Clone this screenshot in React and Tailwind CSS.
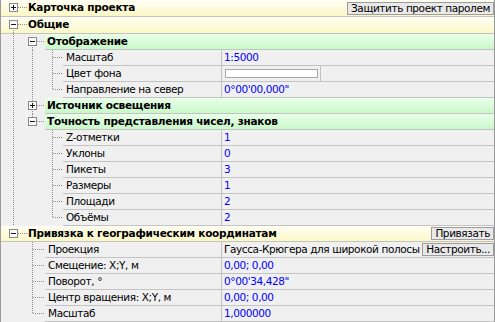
import React from "react";

const DOT = "#8f8f8f";

function V({ x, y1 = 0, y2 = 17 }) {
  return <line x1={x + 0.5} x2={x + 0.5} y1={y1} y2={y2} stroke={DOT} strokeDasharray="1 1" />;
}
function H({ x1, x2, y = 7 }) {
  return <line x1={x1} x2={x2} y1={y + 0.5} y2={y + 0.5} stroke={DOT} strokeDasharray="1 1" />;
}
function Box({ cx, cy = 7, plus }) {
  return (
    <g>
      <rect x={cx - 3.5} y={cy - 3.5} width="8" height="8" fill="#fbfbfb" stroke="#8a8a8a" />
      <line x1={cx - 2} x2={cx + 3} y1={cy + 0.5} y2={cy + 0.5} stroke="#1a1a1a" />
      {plus && <line x1={cx + 0.5} x2={cx + 0.5} y1={cy - 2} y2={cy + 3} stroke="#1a1a1a" />}
    </g>
  );
}

// x coords in the svg are relative to the inner left edge (page x - 1)
function Gutter({ w, h = 16, children }) {
  return (
    <svg width={w} height={h} className="shrink-0 block" shapeRendering="crispEdges">
      {children}
    </svg>
  );
}

function Btn({ children, className = "" }) {
  return (
    <div className={"h-[13px] flex items-center px-[3px] bg-[#e9e9e9] border border-[#9c9c9c] text-black font-normal tracking-[-0.4px] leading-none " + className}>
      {children}
    </div>
  );
}

function Cat({ label, plus, lines, btn, tall }) {
  const h = tall ? 17 : 16;
  const cy = tall ? 7 : 7;
  return (
    <div className={"flex bg-gradient-to-b from-[#fffff4] to-[#fbf7c6] border-b border-[#c3c3c3] " + (tall ? "h-[17px]" : "h-[16px]")}>
      <Gutter w={26} h={h}>
        {lines}
        <Box cx={12} cy={cy} plus={plus} />
        <H x1={17} x2={26} y={cy} />
      </Gutter>
      <div className="flex-1 flex items-center font-bold tracking-[-0.25px] text-black pl-[1px] whitespace-nowrap">{label}</div>
      {btn && <Btn className="self-center">{btn}</Btn>}
    </div>
  );
}

function Grp({ label, plus, up, down, tall }) {
  return (
    <div className={"flex " + (tall ? "h-[17px]" : "h-[16px]")}>
      <Gutter w={44} h={tall ? 17 : 16}>
        <V x={12} />
        {up && <V x={31} y1={0} y2={4} />}
        {down && <V x={31} y1={11} y2={17} />}
        <Box cx={31} plus={plus} />
        <H x1={36} x2={44} />
      </Gutter>
      <div className="flex-1 flex items-center pl-[2px] font-bold tracking-[-0.25px] text-black bg-gradient-to-b from-[#eaffea] to-[#c9f8c9] border-b border-[#c3c3c3] whitespace-nowrap">
        {label}
      </div>
    </div>
  );
}

function Value({ v }) {
  if (v.color)
    return (
      <div className="flex-1 flex items-stretch">
        <div className="w-[99px] flex items-center pl-[3px] border-r border-[#c3c3c3]">
          <div className="w-[93px] h-[9px] bg-white border border-[#a8a8a8]" />
        </div>
      </div>
    );
  return (
    <div className="flex-1 flex items-center pl-[2px] whitespace-nowrap">
      <span className={v.blue ? "text-[#0000ff]" : "text-black"}>{v.text}</span>
      {v.btn && <Btn className="ml-auto">{v.btn}</Btn>}
    </div>
  );
}

function Item({ label, value, gw, lines }) {
  return (
    <div className="h-[16px] flex">
      <Gutter w={gw}>{lines}</Gutter>
      <div className="flex-1 flex border-b border-[#c3c3c3]">
        <div className="shrink-0 flex items-center pl-[3px] border-r border-[#c3c3c3] text-black whitespace-nowrap" style={{ width: 222 - 1 - gw }}>
          {label}
        </div>
        <Value v={value} />
      </div>
    </div>
  );
}

function Item2({ label, value, l1, last }) {
  return (
    <Item
      label={label}
      value={value}
      gw={62}
      lines={
        <>
          <V x={12} />
          {l1 && <V x={31} />}
          <V x={51} y1={0} y2={last ? 8 : 16} />
          <H x1={52} x2={62} />
        </>
      }
    />
  );
}

function Item1({ label, value, last }) {
  return (
    <Item
      label={label}
      value={value}
      gw={44}
      lines={
        <>
          <V x={31} y1={0} y2={last ? 8 : 16} />
          <H x1={32} x2={44} />
        </>
      }
    />
  );
}

const b = (text) => ({ text, blue: true });

export default function App() {
  return (
    <div className="w-[495px] h-[322px] bg-[#f0f0f0] font-['DejaVu_Sans',sans-serif] text-[10.5px] tracking-[-0.4px] overflow-hidden">
      <div className="w-[495px] h-[322px] border-l border-r border-[#9a9a9a]">
        <div className="border-b border-dotted border-[#9a9a9a]">
          <Cat label="Карточка проекта" plus btn="Защитить проект паролем" tall />
          <Cat label="Общие" lines={<V x={12} y1={11} y2={17} />} tall />
          <Grp label="Отображение" down />
          <Item2 label="Масштаб" value={b("1:5000")} l1 />
          <Item2 label="Цвет фона" value={{ color: true }} l1 />
          <Item2 label="Направление на север" value={b("0°00'00,000\"")} l1 last />
          <Grp label="Источник освещения" plus up down />
          <Grp label="Точность представления чисел, знаков" up />
          <Item2 label="Z-отметки" value={b("1")} />
          <Item2 label="Уклоны" value={b("0")} />
          <Item2 label="Пикеты" value={b("3")} />
          <Item2 label="Размеры" value={b("1")} />
          <Item2 label="Площади" value={b("2")} />
          <Item2 label="Объёмы" value={b("2")} last />
          <Cat label="Привязка к географическим координатам" btn="Привязать" />
          <Item1 label="Проекция" value={{ text: "Гаусса-Крюгера для широкой полосы", btn: "Настроить..." }} />
          <Item1 label="Смещение: X;Y, м" value={b("0,00; 0,00")} />
          <Item1 label="Поворот, °" value={b("0°00'34,428\"")} />
          <Item1 label="Центр вращения: X;Y, м" value={b("0,00; 0,00")} />
          <Item1 label="Масштаб" value={b("1,000000")} last />
        </div>
      </div>
    </div>
  );
}
